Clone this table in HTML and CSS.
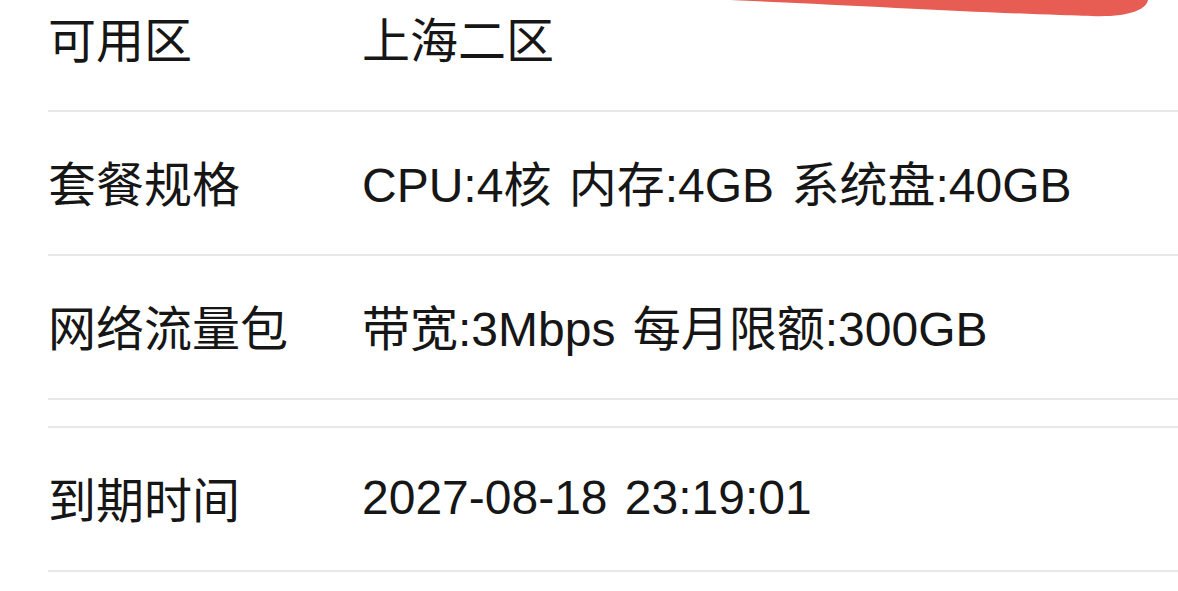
FILE: index.html
```html
<!DOCTYPE html>
<html lang="zh-CN">
<head>
    <meta charset="UTF-8">
    <meta name="viewport" content="width=device-width, initial-scale=1.0">
    <title>实例信息</title>
    <link rel="stylesheet" href="styles.css">
</head>
<body>
    <svg class="mark" width="460" height="20" viewBox="0 0 460 20">
        <path d="M30,0 C150,5 270,12 360,15 C390,16 405,17 420,15 C440,12 447,6 448,0 Z" fill="#e75d53"/>
    </svg>

    <div class="info-list">
        <div class="info-row">
            <span class="label">可用区</span>
            <span class="value">上海二区</span>
        </div>
        <div class="info-row">
            <span class="label">套餐规格</span>
            <span class="value">CPU:4核 内存:4GB 系统盘:40GB</span>
        </div>
        <div class="info-row">
            <span class="label">网络流量包</span>
            <span class="value">带宽:3Mbps 每月限额:300GB</span>
        </div>
    </div>

    <div class="info-list second">
        <div class="info-row">
            <span class="label">到期时间</span>
            <span class="value">2027-08-18 23:19:01</span>
        </div>
    </div>
</body>
</html>
```

FILE: styles.css
```css
body {
    margin: 0;
    background-color: #ffffff;
    font-family: "Liberation Sans", "Noto Sans CJK SC", sans-serif;
    color: #161616;
    overflow: hidden;
}

.mark {
    position: absolute;
    top: 0;
    left: 700px;
}

.info-list {
    margin-top: -32px;
    margin-left: 48px;
}

.info-list.second {
    margin-top: 26px;
    border-top: 2px solid #e8e8e8;
}

.info-row {
    display: flex;
    align-items: center;
    height: 138px;
    padding-bottom: 4px;
    border-bottom: 2px solid #e8e8e8;
    font-size: 48px;
    word-spacing: 4px;
}

.label {
    width: 314px;
    flex-shrink: 0;
}

.value {
    white-space: nowrap;
}
```
